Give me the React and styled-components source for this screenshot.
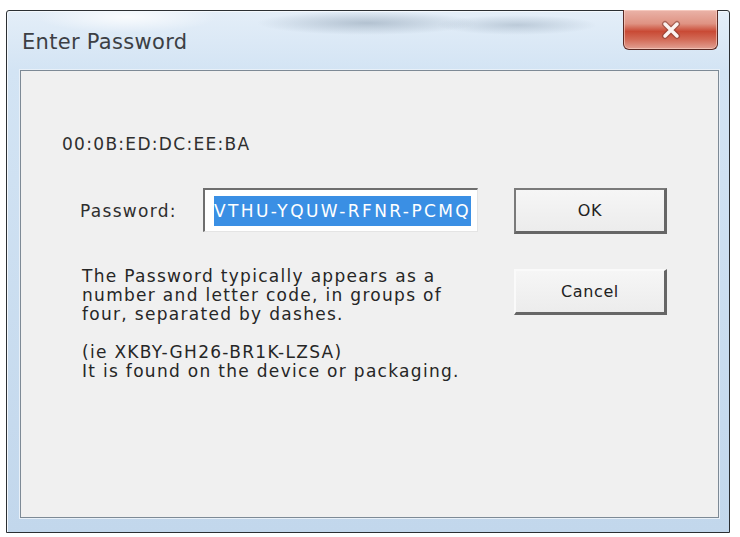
import React from 'react';
import styled, { createGlobalStyle } from 'styled-components';

const GlobalStyle = createGlobalStyle`
  html, body {
    margin: 0;
    padding: 0;
    background: #ffffff;
  }
  body {
    font-family: "DejaVu Sans", "Liberation Sans", sans-serif;
  }
`;

const Window = styled.div`
  margin: 10px 0 0 6px;
  width: 724px;
  height: 523px;
  box-sizing: border-box;
  border: 1px solid #2b2f33;
  border-radius: 3px 3px 0 0;
  background:
    radial-gradient(ellipse 110px 12px at 360px 12px, rgba(110, 130, 150, 0.4), transparent),
    radial-gradient(ellipse 80px 10px at 510px 14px, rgba(120, 140, 160, 0.35), transparent),
    radial-gradient(ellipse 90px 16px at 120px 6px, rgba(255, 255, 255, 0.8), transparent),
    linear-gradient(180deg, #e4eef8 0px, #d3e4f4 60px, #c2d7ec 100%);
  display: flex;
  flex-direction: column;
  box-shadow: inset 1px 1px 0 #f4f8fc, 0 2px 0 #111;
`;

const TitleBar = styled.div`
  height: 59px;
  display: flex;
  align-items: flex-start;
  justify-content: space-between;
  padding: 0 11px 0 15px;
`;

const Title = styled.div`
  margin-top: 19px;
  font-size: 21px;
  color: #3c3f44;
  letter-spacing: 0.3px;
`;

const CloseButton = styled.div`
  width: 95px;
  height: 40px;
  margin-top: -1px;
  box-sizing: border-box;
  border: 1px solid #5a2a24;
  border-top: none;
  border-radius: 0 0 6px 6px;
  background: linear-gradient(180deg, #eab3a8 0%, #df9383 35%, #c94a35 55%, #d26a56 75%, #e2a093 100%);
  box-shadow: inset 0 0 0 1px rgba(255, 220, 210, 0.55);
  display: flex;
  align-items: center;
  justify-content: center;
`;

const Client = styled.div`
  flex: 1;
  margin: 0 10px 14px 13px;
  background: #f0f0f0;
  border: 1px solid #7d8a96;
  box-shadow: 0 0 0 1px #e8f0f8;
  display: grid;
  grid-template-columns: 452px 153px;
  grid-template-rows: 20px 46px auto;
  row-gap: 34px;
  padding: 63px 0 0 41px;
  align-content: start;
  color: #262626;
  font-size: 17px;
  letter-spacing: 1.3px;
`;

const MacLine = styled.div`
  grid-column: 1 / 3;
  line-height: 20px;
  color: #2e2e2e;
`;

const FieldRow = styled.div`
  grid-column: 1;
  display: flex;
  align-items: center;
  padding-left: 18px;
`;

const Label = styled.div`
  width: 123px;
  color: #2e2e2e;
`;

const Input = styled.div`
  width: 275px;
  height: 44px;
  box-sizing: border-box;
  margin-top: -2px;
  background: #ffffff;
  border-top: 2px solid #6e6e6e;
  border-left: 2px solid #6e6e6e;
  border-right: 1px solid #e4e4e4;
  border-bottom: 1px solid #e4e4e4;
  display: flex;
  align-items: center;
  padding-left: 9px;
`;

const Selection = styled.span`
  background: #3a8fe4;
  color: #ffffff;
  font-size: 17px;
  line-height: 30px;
  height: 30px;
  letter-spacing: 2.4px;
`;

const Button = styled.div`
  margin-top: ${p => p.$offset}px;
  width: 153px;
  height: 46px;
  box-sizing: border-box;
  background: linear-gradient(180deg, #f6f6f6, #ececec);
  border-top: 2px solid ${p => (p.$default ? '#7a7a7a' : '#fafafa')};
  border-left: 2px solid ${p => (p.$default ? '#7a7a7a' : '#fafafa')};
  border-right: 3px solid #666;
  border-bottom: 3px solid #666;
  display: flex;
  align-items: center;
  justify-content: center;
  font-size: 16px;
  letter-spacing: 0.6px;
  color: #222;
`;

const Description = styled.div`
  grid-column: 1;
  margin-top: -1px;
  padding-left: 20px;
  line-height: 19px;
`;

const Line = styled.div`
  min-height: 19px;
  white-space: nowrap;
`;

const CloseIcon = () => (
  <svg width="28" height="22" viewBox="0 0 28 22">
    <path d="M8 5 L20 17 M20 5 L8 17" stroke="#7a3a30" strokeWidth="6" strokeLinecap="round" opacity="0.55" />
    <path d="M8 5 L20 17 M20 5 L8 17" stroke="#fbf4f2" strokeWidth="3.5" strokeLinecap="round" />
  </svg>
);

export default function App() {
  return (
    <>
      <GlobalStyle />
      <Window>
        <TitleBar>
          <Title>Enter Password</Title>
          <CloseButton>
            <CloseIcon />
          </CloseButton>
        </TitleBar>
        <Client>
          <MacLine>00:0B:ED:DC:EE:BA</MacLine>
          <FieldRow>
            <Label>Password:</Label>
            <Input>
              <Selection>VTHU-YQUW-RFNR-PCMQ</Selection>
            </Input>
          </FieldRow>
          <Button $default $offset={0}>OK</Button>
          <Description>
            <Line>The Password typically appears as a</Line>
            <Line>number and letter code, in groups of</Line>
            <Line>four, separated by dashes.</Line>
            <Line />
            <Line>(ie XKBY-GH26-BR1K-LZSA)</Line>
            <Line>It is found on the device or packaging.</Line>
          </Description>
          <Button $offset={1}>Cancel</Button>
        </Client>
      </Window>
    </>
  );
}
